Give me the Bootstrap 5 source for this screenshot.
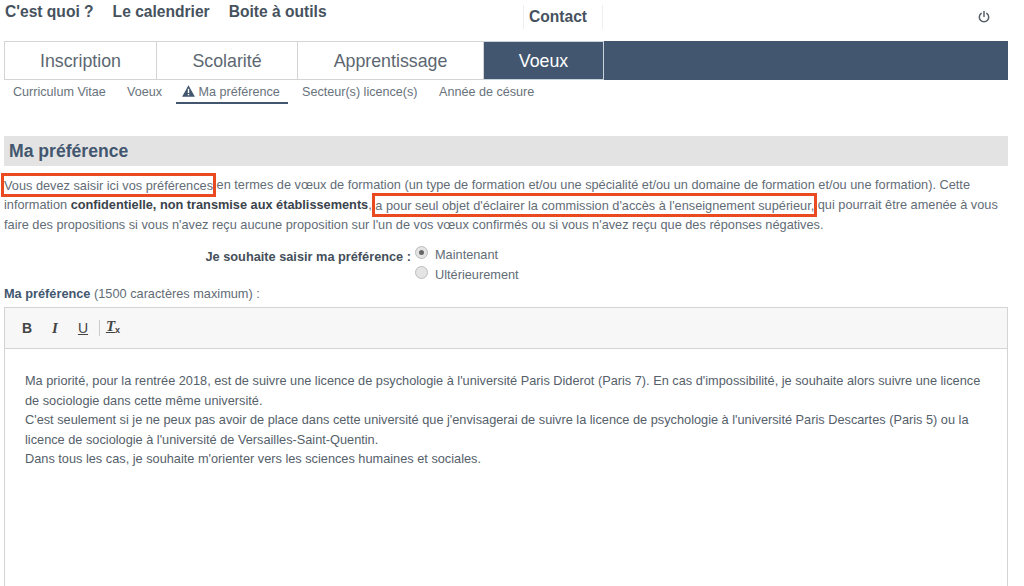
<!DOCTYPE html>
<html lang="fr">
<head>
<meta charset="utf-8">
<title>Ma préférence</title>
<link href="https://cdn.jsdelivr.net/npm/bootstrap@5.3.0/dist/css/bootstrap.min.css" rel="stylesheet">
<style>
html,body{height:586px;overflow:hidden;background:#fff}
body{font-family:"Liberation Sans",Arial,sans-serif;font-size:12.75px;color:#626c76;line-height:20px}
.shell{width:1004px;margin-left:4px}
.topbar{height:41px}
.toplinks{padding-top:3px;margin-left:1px;gap:19px}
.toplinks a{font-size:15.6px;font-weight:700;color:#46525e;text-decoration:none;line-height:18px}
.contact{margin-left:191px;margin-top:5px;width:80px;height:24px;border-left:1px solid #eee;border-right:1px solid #eee;font-size:15.6px;font-weight:700;color:#46525e;text-align:center;line-height:24px;padding-right:10px}
.powerbtn{margin-right:17px;margin-top:10px;width:14px;height:14px}
.maintabs{background:#42576f;height:39px}
.maintabs a{display:block;height:39px;line-height:38px;font-size:17.8px;text-align:center;color:#5c6771;background:#fff;border:1px solid #d4d4d4;border-left-width:0;text-decoration:none}
.maintabs a:first-child{border-left-width:1px;width:153px}
.maintabs a.tb2{width:141px}
.maintabs a.tb3{width:186px}
.maintabs a.active-tab{width:120px;background:#42576f;color:#fff;border-color:#c9d3dc;border-width:1px 1px 1px 0}
.subtabs{margin-left:1px;height:24px}
.subtabs a{font-size:12.6px;color:#68727c;text-decoration:none;line-height:17px;height:24px;padding-top:4px}
.subtabs a.st1{margin-left:8px;width:114px}
.subtabs a.st2{width:49px}
.subtabs a.cur{border-bottom:2px solid #42576f;width:112px;padding-left:6px}
.subtabs a.st4{margin-left:14px;width:137px}
.sectionbar{margin-top:32px;height:30px;background:#e3e3e3;font-size:17.6px;font-weight:700;color:#42576f;line-height:31px;padding-left:5px}
.intro{margin:9px 0 0;line-height:20px;color:#626c76}
.intro b{color:#3a434c}
.mark-red{outline:3px solid #ea4a1f;outline-offset:0;padding:1.5px 0}
.choice{margin-top:10px;height:39px}
.choicelabel{width:407px;text-align:right;font-weight:700;color:#444f5a;padding-top:2px}
.opts{margin-left:4px;line-height:20px}
.opts .line{display:flex;align-items:center;gap:7px;height:20px}
.rdo{width:13px;height:13px;border-radius:50%;background:#e4e4e4;border:1px solid #bcbcbc;position:relative;top:-3px;flex:none}
.rdo.on::after{content:"";display:block;width:5px;height:5px;border-radius:50%;background:#666;margin:3px}
.fieldlabel{height:20px;line-height:19px;margin-bottom:3px}
.fieldlabel b{color:#42576f}
.editor{border:1px solid #d4d4d4;border-radius:0;height:300px;background:#fff}
.edtools{height:41px;background:#f7f7f7;border-bottom:1px solid #d4d4d4;padding-left:8px}
.tbtn{width:28px;text-align:center;font-family:"Liberation Serif","Liberation Sans",serif;font-size:15px;font-weight:700;color:#444;line-height:20px}
.tbtn.s{font-family:"Liberation Sans",sans-serif;font-size:14px}
.tsep{width:1px;height:16px;background:#ccc;margin:0 0 0 2px}
.tclear{margin-left:1px;width:24px}
.tclear small{font-size:9px;font-family:"Liberation Sans",sans-serif;vertical-align:-2px}
.edbody{padding:22px 20px 0;line-height:19.6px;color:#55606a}
.edbody p{margin:0}
</style>
</head>
<body>
<div class="shell">
  <div class="topbar d-flex align-items-start">
    <nav class="toplinks d-flex" style="width:327px"><a href="#">C'est quoi ?</a><a href="#">Le calendrier</a><a href="#">Boite à outils</a></nav>
    <div class="contact">Contact</div>
    <svg class="powerbtn ms-auto" viewBox="0 0 14 14" fill="none" stroke="#55606a" stroke-width="1.5" stroke-linecap="round"><path d="M4.2 3.4a4.7 4.7 0 1 0 5.6 0"/><path d="M7 1.6v5"/></svg>
  </div>
  <nav class="maintabs d-flex">
    <a href="#">Inscription</a><a href="#" class="tb2">Scolarité</a><a href="#" class="tb3">Apprentissage</a><a href="#" class="active-tab">Voeux</a>
  </nav>
  <nav class="subtabs d-flex">
    <a href="#" class="st1">Curriculum Vitae</a>
    <a href="#" class="st2">Voeux</a>
    <a href="#" class="cur"><svg width="13" height="12" viewBox="0 0 13 12" style="vertical-align:-1px"><path fill="#42576f" d="M6.5.3 12.9 11.7H.1z"/><rect x="5.8" y="3.8" width="1.4" height="4.2" fill="#fff"/><rect x="5.8" y="8.9" width="1.4" height="1.4" fill="#fff"/></svg> Ma préférence</a>
    <a href="#" class="st4">Secteur(s) licence(s)</a>
    <a href="#">Année de césure</a>
  </nav>
  <h1 class="sectionbar mb-0">Ma préférence</h1>
  <p class="intro"><span class="mark-red">Vous devez saisir ici vos préférences</span> en termes de vœux de formation (un type de formation et/ou une spécialité et/ou un domaine de formation et/ou une formation). Cette information <b>confidentielle, non transmise aux établissements</b>, <span class="mark-red">a pour seul objet d'éclairer la commission d'accès à l'enseignement supérieur,</span> qui pourrait être amenée à vous faire des propositions si vous n'avez reçu aucune proposition sur l'un de vos vœux confirmés ou si vous n'avez reçu que des réponses négatives.</p>
  <div class="choice d-flex">
    <div class="choicelabel">Je souhaite saisir ma préférence :</div>
    <div class="opts">
      <div class="line"><span class="rdo on"></span>Maintenant</div>
      <div class="line"><span class="rdo"></span>Ultérieurement</div>
    </div>
  </div>
  <div class="fieldlabel"><b>Ma préférence</b> (1500 caractères maximum) :</div>
  <div class="editor">
    <div class="edtools d-flex align-items-center">
      <span class="tbtn s">B</span><span class="tbtn"><i>I</i></span><span class="tbtn s text-decoration-underline" style="font-weight:400">U</span><span class="tsep"></span><span class="tbtn tclear"><i class="text-decoration-underline">T</i><small>x</small></span>
    </div>
    <div class="edbody">
      <p>Ma priorité, pour la rentrée 2018, est de suivre une licence de psychologie à l'université Paris Diderot (Paris 7). En cas d'impossibilité, je souhaite alors suivre une licence de sociologie dans cette même université.</p>
      <p>C'est seulement si je ne peux pas avoir de place dans cette université que j'envisagerai de suivre la licence de psychologie à l'université Paris Descartes (Paris 5) ou la licence de sociologie à l'université de Versailles-Saint-Quentin.</p>
      <p>Dans tous les cas, je souhaite m'orienter vers les sciences humaines et sociales.</p>
    </div>
  </div>
</div>
</body>
</html>
